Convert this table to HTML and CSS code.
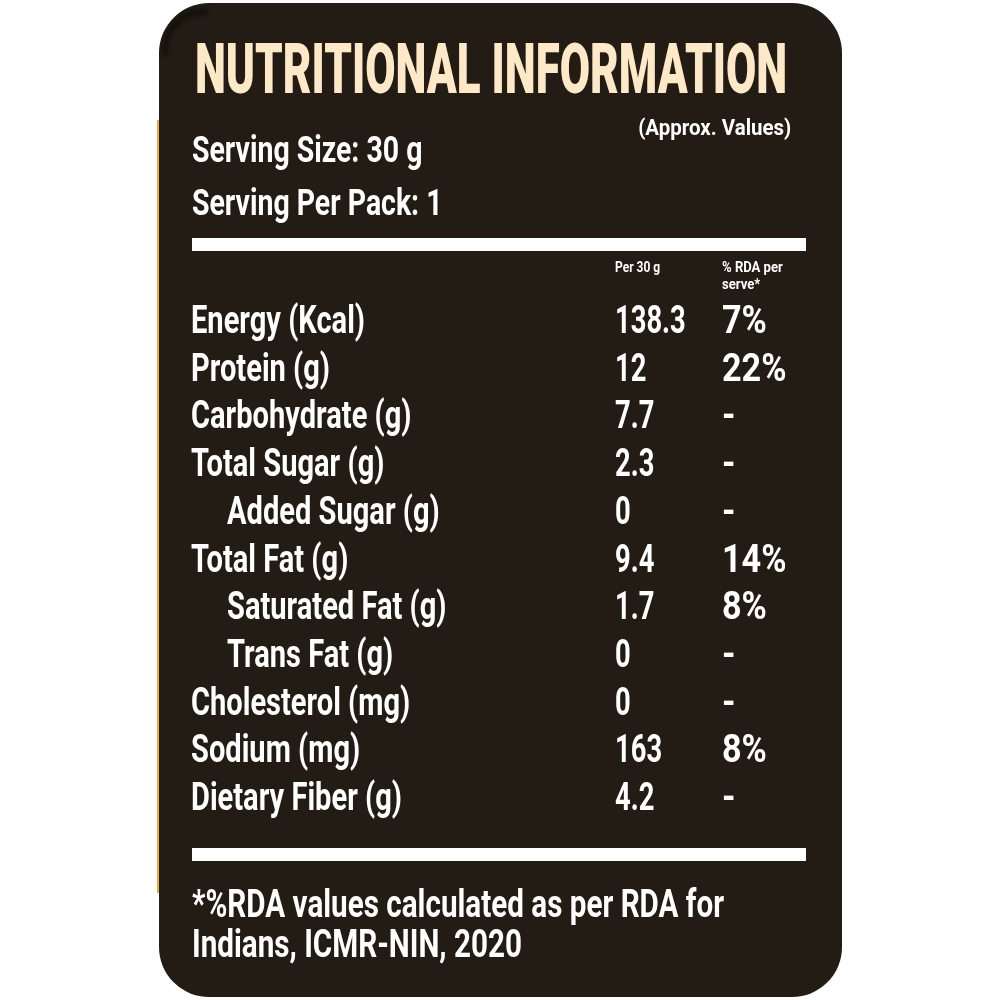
FILE: index.html
```html
<!DOCTYPE html>
<html lang="en">
<head>
<meta charset="utf-8">
<title>Nutritional Information</title>
<link rel="stylesheet" href="styles.css">
</head>
<body>
<div class="frame">
<div class="card">
  <h1 class="title"><span class="sx">NUTRITIONAL INFORMATION</span></h1>
  <div class="meta">
    <div class="servings">
      <div class="serving"><span class="sx">Serving Size: 30 g</span></div>
      <div class="serving"><span class="sx">Serving Per Pack: 1</span></div>
    </div>
    <div class="approx"><span class="sx">(Approx. Values)</span></div>
  </div>
  <div class="bar"></div>
  <div class="grid head">
    <div></div>
    <div class="hcell"><span class="sx">Per 30 g</span></div>
    <div class="hcell rdah"><span class="sx">% RDA per<br>serve*</span></div>
  </div>
  <div class="grid rows">
    <div class="lbl"><span class="sx">Energy (Kcal)</span></div><div class="val"><span class="sx">138.3</span></div><div class="val rda"><span class="sx">7%</span></div>
    <div class="lbl"><span class="sx">Protein (g)</span></div><div class="val"><span class="sx">12</span></div><div class="val rda"><span class="sx">22%</span></div>
    <div class="lbl"><span class="sx">Carbohydrate (g)</span></div><div class="val"><span class="sx">7.7</span></div><div class="val rda"><span class="sx">-</span></div>
    <div class="lbl"><span class="sx">Total Sugar (g)</span></div><div class="val"><span class="sx">2.3</span></div><div class="val rda"><span class="sx">-</span></div>
    <div class="lbl sub"><span class="sx">Added Sugar (g)</span></div><div class="val"><span class="sx">0</span></div><div class="val rda"><span class="sx">-</span></div>
    <div class="lbl"><span class="sx">Total Fat (g)</span></div><div class="val"><span class="sx">9.4</span></div><div class="val rda"><span class="sx">14%</span></div>
    <div class="lbl sub"><span class="sx">Saturated Fat (g)</span></div><div class="val"><span class="sx">1.7</span></div><div class="val rda"><span class="sx">8%</span></div>
    <div class="lbl sub"><span class="sx">Trans Fat (g)</span></div><div class="val"><span class="sx">0</span></div><div class="val rda"><span class="sx">-</span></div>
    <div class="lbl"><span class="sx">Cholesterol (mg)</span></div><div class="val"><span class="sx">0</span></div><div class="val rda"><span class="sx">-</span></div>
    <div class="lbl"><span class="sx">Sodium (mg)</span></div><div class="val"><span class="sx">163</span></div><div class="val rda"><span class="sx">8%</span></div>
    <div class="lbl"><span class="sx">Dietary Fiber (g)</span></div><div class="val"><span class="sx">4.2</span></div><div class="val rda"><span class="sx">-</span></div>
  </div>
  <div class="bar bar2"></div>
  <div class="foot">
    <div class="fline"><span class="sx">*%RDA values calculated as per RDA for</span></div>
    <div class="fline"><span class="sx">Indians, ICMR-NIN, 2020</span></div>
  </div>
</div>
</div>
</body>
</html>
```

FILE: styles.css
```css
html, body {
  margin: 0;
  padding: 0;
  background: #ffffff;
}
body {
  font-family: Roboto, "Liberation Sans", sans-serif;
  color: #ffffff;
}
.frame {
  position: relative;
  width: 683px;
  margin: 3px 0 0 159px;
}
.frame::before {
  content: "";
  position: absolute;
  left: -2px;
  top: 117px;
  bottom: 104px;
  width: 2px;
  background: #eea932;
}
.card {
  position: relative;
  box-sizing: border-box;
  width: 683px;
  height: 994px;
  padding: 31px 36px 0 32px;
  background: #221c15;
  border-radius: 50px;
  overflow: hidden;
}
.card::before {
  content: "";
  position: absolute;
  left: 4px;
  top: 6px;
  width: 40px;
  height: 40px;
  border-radius: 40px 0 0 0;
  border-top: 6px solid #0e0b08;
  border-left: 5px solid #0e0b08;
  opacity: 0.7;
  filter: blur(2px);
}
.sx {
  display: inline-block;
  white-space: nowrap;
  transform-origin: left center;
  transform: scaleX(var(--sx, 0.72));
}
.title {
  margin: 0;
  padding-left: 4px;
  font-size: 70px;
  line-height: 70px;
  font-weight: 900;
  color: #fde9c7;
  --sx: 0.628;
}
.meta {
  display: flex;
  justify-content: space-between;
  align-items: flex-start;
  margin-top: 12px;
}
.servings {
  padding-top: 8px;
}
.serving {
  font-size: 36px;
  line-height: 53px;
  font-weight: 700;
  padding-left: 1px;
  --sx: 0.79;
}
.approx {
  font-size: 22.5px;
  line-height: 22px;
  font-weight: 700;
  padding-right: 15px;
  text-align: right;
}
.approx .sx {
  transform-origin: right center;
  --sx: 0.91;
}
.bar {
  height: 13px;
  background: #ffffff;
  margin-top: 8px;
  margin-left: 1px;
}
.grid {
  display: grid;
  grid-template-columns: 424px 107px 1fr;
}
.head {
  margin-top: 8px;
}
.hcell {
  font-size: 15px;
  line-height: 17px;
  font-weight: 700;
  --sx: 0.8;
}
.hcell.rdah {
  --sx: 0.87;
}
.rows {
  margin-top: 4px;
}
.lbl, .val {
  font-size: 38px;
  line-height: 47.7px;
  font-weight: 700;
}
.lbl {
  --sx: 0.765;
}
.val {
  --sx: 0.72;
}
.val.rda {
  --sx: 0.9;
}
.lbl.sub {
  padding-left: 36px;
}
.bar2 {
  margin-top: 26px;
}
.foot {
  margin: 23px 0 0 1px;
  font-size: 39px;
  font-weight: 700;
}
.fline {
  line-height: 40px;
  height: 40px;
  --sx: 0.76;
}
```
